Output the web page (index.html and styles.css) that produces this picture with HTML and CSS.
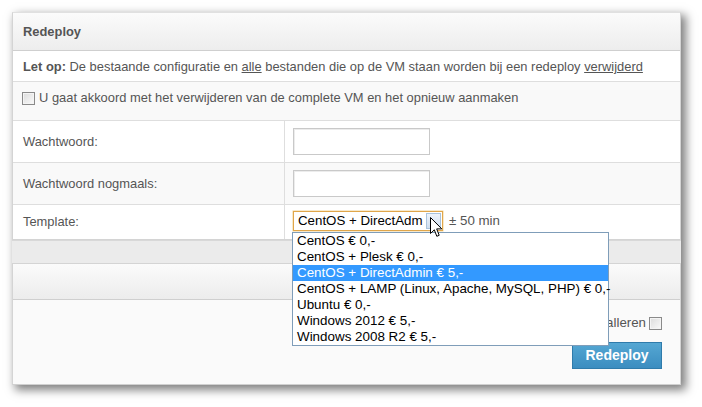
FILE: index.html
```html
<!DOCTYPE html>
<html>
<head>
<meta charset="utf-8">
<link rel="stylesheet" href="styles.css">
</head>
<body>
<div class="window">
  <div class="panel">
    <div class="phead">Redeploy</div>
    <div class="row note"><b>Let op:</b> De bestaande configuratie en <u>alle</u> bestanden die op de VM staan worden bij een redeploy <u>verwijderd</u></div>
    <div class="row agree alt"><span class="cb"></span>U gaat akkoord met het verwijderen van de complete VM en het opnieuw aanmaken</div>
    <div class="row field"><div class="lab">Wachtwoord:</div><div class="val"><span class="inp"></span></div></div>
    <div class="row field alt"><div class="lab">Wachtwoord nogmaals:</div><div class="val"><span class="inp"></span></div></div>
    <div class="row field tpl"><div class="lab">Template:</div><div class="val"><span class="sel"><span class="seltext">CentOS + DirectAdm</span><span class="selbtn"></span></span><span class="dur">± 50 min</span></div></div>
  </div>
  <div class="strip"></div>
  <div class="panel2">
    <div class="phead2"></div>
    <div class="pbody">
      <div class="opt">Automatisch installeren <span class="cb"></span></div>
      <div class="btn">Redeploy</div>
    </div>
  </div>
  <ul class="list">
    <li>CentOS € 0,-</li>
    <li>CentOS + Plesk € 0,-</li>
    <li class="hl">CentOS + DirectAdmin € 5,-</li>
    <li>CentOS + LAMP (Linux, Apache, MySQL, PHP) € 0,-</li>
    <li>Ubuntu € 0,-</li>
    <li>Windows 2012 € 5,-</li>
    <li>Windows 2008 R2 € 5,-</li>
  </ul>
  <svg class="cursor" width="13" height="21" viewBox="0 0 13 21"><path d="M0.5 0.5 L0.5 16.5 L4.3 12.8 L6.8 19.3 L9.2 18.3 L6.7 11.9 L11.8 11.9 Z" fill="#fff" stroke="#000" stroke-width="1" stroke-linejoin="miter"/></svg>
</div>
</body>
</html>
```
FILE: styles.css
```css
html, body { margin: 0; padding: 0; background: #fff; }
body {
  padding: 12px 0 22px 12px;
  min-height: 407px;
  box-sizing: border-box;
  font-family: "Liberation Sans", Arial, sans-serif;
  font-size: 12.9px;
  color: #555;
}
.window {
  position: relative;
  width: 669px;
  height: 373px;
  background: #ececec;
  box-shadow: 4px 4px 9px 1px rgba(0,0,0,0.5);
  display: flex;
  flex-direction: column;
}
.panel { background: #fff; border: 1px solid #d4d4d4; border-top-color: #e0e0e0; }
.phead {
  height: 37px;
  line-height: 37px;
  padding-left: 10px;
  font-weight: bold;
  color: #555;
  background: linear-gradient(#fbfbfb, #ededed);
  border-bottom: 1px solid #cfcfcf;
}
.row { border-bottom: 1px solid #dedede; }
.row.alt { background: #f9f9f9; }
.note { height: 30px; line-height: 32px; padding-left: 10px; }
.note b { color: #555; }
.agree { height: 39px; padding: 8px 0 0 9px; box-sizing: border-box; display: flex; align-items: flex-start; line-height: 16px; }
.cb { display: inline-block; width: 11px; height: 11px; border: 1px solid #8a8a8a; background: linear-gradient(135deg, #dcdcdc, #fafafa); box-shadow: inset 0 0 0 1px #f4f4f4; }
.agree .cb { margin: 2px 4px 0 0; }
.field { display: flex; height: 41px; }
.field.tpl { height: 34px; border-bottom: none; }
.lab { width: 261px; padding-left: 10px; border-right: 1px solid #dedede; line-height: 41px; }
.tpl .lab { line-height: 34px; }
.val { padding-left: 8px; display: flex; align-items: flex-start; }
.inp { display: block; margin-top: 7px; width: 135px; height: 25px; border: 1px solid #c9c9c9; background: #fff; box-shadow: inset 1px 1px 0 #ececec; }
.sel {
  margin-top: 6px;
  width: 148px; height: 18px;
  border: 1px solid #e0a64a;
  background: #fff;
  display: flex;
  box-shadow: 0 0 0 0.5px #f0d49a;
  font-size: 13.3px;
}
.seltext { flex: 1; padding-left: 4px; line-height: 18px; color: #000; white-space: nowrap; overflow: hidden; }
.selbtn { width: 15px; height: 16px; margin: 1px; border: 1px solid #a9c3dd; box-sizing: border-box; background: linear-gradient(#eef4fb, #cfdeef); }
.dur { margin: 7px 0 0 6px; line-height: 18px; color: #555; font-size: 13.3px; }
.strip { height: 22px; background: #ebebeb; border-top: 1px solid #d8d8d8; }
.panel2 { flex: 1; border: 1px solid #d4d4d4; border-bottom: 1px solid #d0d0d0; display: flex; flex-direction: column; background: #fafafa; }
.phead2 { height: 35px; background: linear-gradient(#fbfbfb, #ececec); border-bottom: 1px solid #cfcfcf; }
.pbody { flex: 1; padding: 15px 18px 0 0; display: flex; flex-direction: column; align-items: flex-end; }
.opt { line-height: 16px; display: flex; align-items: center; font-size: 13.3px; }
.opt .cb { margin-left: 3px; }
.btn {
  margin-top: 11px;
  width: 88px; height: 25px;
  line-height: 25px;
  text-align: center;
  font-weight: bold;
  font-size: 14px;
  color: #fff;
  background: linear-gradient(#55a7d3, #3b8dc0);
  border: 1px solid #2f7bab;
}
.list {
  position: absolute;
  left: 280px; top: 220px;
  margin: 0; padding: 0;
  list-style: none;
  width: 315px;
  border: 1px solid #7f9db9;
  background: #fff;
  font-size: 13.4px;
}
.list li { height: 16px; line-height: 16px; padding-left: 4px; color: #000; white-space: nowrap; }
.list li.hl { background: #3399ff; color: #fff; }
.cursor { position: absolute; left: 418px; top: 205px; }
```
